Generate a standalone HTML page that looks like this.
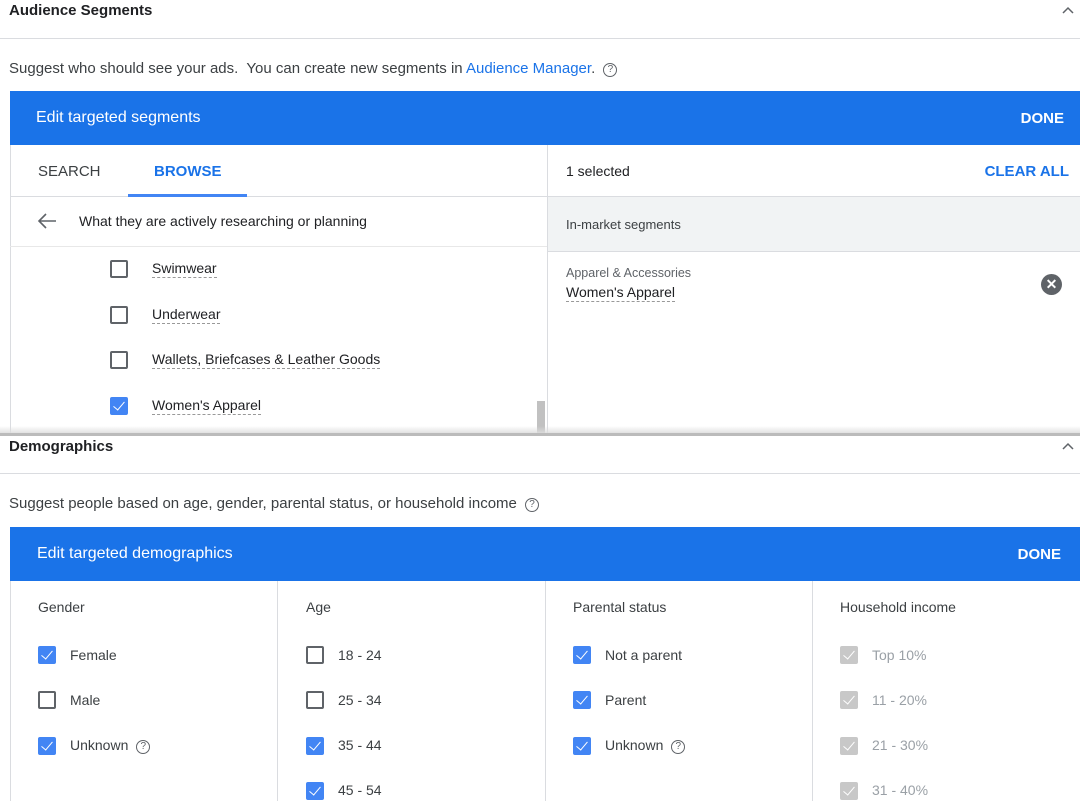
<!DOCTYPE html>
<html><head><style>
*{box-sizing:border-box;margin:0;padding:0}
body{width:1080px;height:801px;overflow:hidden;background:#fff;font-family:"Liberation Sans",sans-serif;color:#3c4043;position:relative}
.a{position:absolute}
.t{font-size:15px;font-weight:bold;color:#202124}
.hr{height:1px;background:#dadce0;left:0;right:0}
.d{font-size:15px;color:#3c4043}
.blue{background:#1a73e8;color:#fff;font-size:16px}
.cb{position:absolute;width:18px;height:18px;border:2px solid #5f6368;border-radius:2px}
.cb.on{background:#4285f4;border-color:#4285f4}
.cb.g{background:#c8c8c8;border-color:#c8c8c8}
.cb.on::after,.cb.g::after{content:"";position:absolute;left:4px;top:0px;width:5px;height:10px;border:solid #fff;border-width:0 1.5px 1.5px 0;transform:rotate(40deg)}
.lbl{position:absolute;font-size:14px;color:#202124}
.ul{border-bottom:1px dashed #999;padding-bottom:1px}
.q{display:inline-block;width:14px;height:14px;border:1.3px solid #5f6368;border-radius:50%;font-size:10px;text-align:center;line-height:12px;vertical-align:1px;margin-left:4px;color:#5f6368}
</style></head><body>
<div class="a t" style="left:9px;top:2px">Audience Segments</div>
<svg class="a" style="left:1062px;top:6px" width="12" height="8" viewBox="0 0 12 8"><path d="M1 7L6 2l5 5" fill="none" stroke="#5f6368" stroke-width="1.5"/></svg>
<div class="a hr" style="top:38px"></div>
<div class="a d" style="left:9px;top:60px">Suggest who should see your ads.&nbsp; You can create new segments in <span style="color:#1a73e8">Audience Manager</span>. <span class="q">?</span></div>
<div class="a blue" style="left:10px;top:91px;width:1070px;height:54px"><span class="a" style="left:26px;top:18px">Edit targeted segments</span><span class="a" style="right:16px;top:19px;font-size:15px;font-weight:bold">DONE</span></div>
<div class="a" style="left:10px;top:145px;width:1px;height:290px;background:#dadce0"></div>
<div class="a" style="left:547px;top:145px;width:1px;height:290px;background:#dadce0"></div>
<div class="a" style="left:10px;top:196px;width:1070px;height:1px;background:#dadce0"></div>
<div class="a" style="left:38px;top:163px;font-size:15px;color:#3c4043">SEARCH</div>
<div class="a" style="left:154px;top:163px;font-size:15px;color:#1a73e8;font-weight:bold">BROWSE</div>
<div class="a" style="left:128px;top:194px;width:119px;height:3px;background:#4285f4"></div>
<svg class="a" style="left:37px;top:213px" width="20" height="16" viewBox="0 0 20 16"><path d="M19 8H2M9 1L2 8l7 7" fill="none" stroke="#5f6368" stroke-width="1.6"/></svg>
<div class="a" style="left:79px;top:213px;font-size:14px;color:#202124">What they are actively researching or planning</div>
<div class="a" style="left:10px;top:246px;width:537px;height:1px;background:#e8e8e8"></div>
<div class="cb" style="left:110px;top:260px"></div><div class="lbl" style="left:152px;top:260px"><span class="ul">Swimwear</span></div>
<div class="cb" style="left:110px;top:306px"></div><div class="lbl" style="left:152px;top:306px"><span class="ul">Underwear</span></div>
<div class="cb" style="left:110px;top:351px"></div><div class="lbl" style="left:152px;top:351px"><span class="ul">Wallets, Briefcases &amp; Leather Goods</span></div>
<div class="cb on" style="left:110px;top:397px"></div><div class="lbl" style="left:152px;top:397px"><span class="ul">Women's Apparel</span></div>
<div class="a" style="left:537px;top:401px;width:8px;height:32px;background:#c1c1c1"></div>
<div class="a" style="left:566px;top:163px;font-size:14px;color:#202124">1 selected</div>
<div class="a" style="right:11px;top:163px;font-size:15px;font-weight:bold;color:#1a73e8">CLEAR ALL</div>
<div class="a" style="left:548px;top:197px;width:532px;height:55px;background:#f1f3f4;border-bottom:1px solid #dadce0"></div>
<div class="a" style="left:566px;top:217px;font-size:13px;color:#3c4043">In-market segments</div>
<div class="a" style="left:566px;top:266px;font-size:12.5px;color:#5f6368">Apparel &amp; Accessories</div>
<div class="a" style="left:566px;top:284px;font-size:14px;color:#202124"><span class="ul">Women's Apparel</span></div>
<div class="a" style="left:1041px;top:274px;width:21px;height:21px;border-radius:50%;background:#5f6368;color:#fff;font-size:14px;text-align:center;line-height:21px;font-weight:bold">&#10005;</div>
<div class="a" style="left:0;top:426px;width:1080px;height:8px;background:linear-gradient(#fff0,#ddd)"></div>
<div class="a" style="left:0;top:433px;width:1080px;height:3px;background:#bbb"></div>
<div class="a t" style="left:9px;top:438px">Demographics</div>
<svg class="a" style="left:1062px;top:442px" width="12" height="8" viewBox="0 0 12 8"><path d="M1 7L6 2l5 5" fill="none" stroke="#5f6368" stroke-width="1.5"/></svg>
<div class="a hr" style="top:473px"></div>
<div class="a d" style="left:9px;top:495px">Suggest people based on age, gender, parental status, or household income <span class="q">?</span></div>
<div class="a blue" style="left:10px;top:527px;width:1070px;height:54px"><span class="a" style="left:27px;top:18px">Edit targeted demographics</span><span class="a" style="right:19px;top:19px;font-size:15px;font-weight:bold">DONE</span></div>
<div class="a" style="left:10px;top:581px;width:1px;height:220px;background:#dadce0"></div>
<div class="a" style="left:277px;top:581px;width:1px;height:220px;background:#dadce0"></div>
<div class="a" style="left:545px;top:581px;width:1px;height:220px;background:#dadce0"></div>
<div class="a" style="left:812px;top:581px;width:1px;height:220px;background:#dadce0"></div>
<div class="lbl" style="left:38px;top:599px;color:#3c4043">Gender</div>
<div class="lbl" style="left:306px;top:599px;color:#3c4043">Age</div>
<div class="lbl" style="left:573px;top:599px;color:#3c4043">Parental status</div>
<div class="lbl" style="left:840px;top:599px;color:#3c4043">Household income</div>
<div class="cb on" style="left:38px;top:646px"></div><div class="lbl" style="left:70px;top:647px;color:#3c4043">Female</div>
<div class="cb" style="left:38px;top:691px"></div><div class="lbl" style="left:70px;top:692px;color:#3c4043">Male</div>
<div class="cb on" style="left:38px;top:737px"></div><div class="lbl" style="left:70px;top:737px;color:#3c4043">Unknown <span class="q">?</span></div>
<div class="cb" style="left:306px;top:646px"></div><div class="lbl" style="left:338px;top:647px;color:#3c4043">18 - 24</div>
<div class="cb" style="left:306px;top:691px"></div><div class="lbl" style="left:338px;top:692px;color:#3c4043">25 - 34</div>
<div class="cb on" style="left:306px;top:737px"></div><div class="lbl" style="left:338px;top:737px;color:#3c4043">35 - 44</div>
<div class="cb on" style="left:306px;top:782px"></div><div class="lbl" style="left:338px;top:782px;color:#3c4043">45 - 54</div>
<div class="cb on" style="left:573px;top:646px"></div><div class="lbl" style="left:605px;top:647px;color:#3c4043">Not a parent</div>
<div class="cb on" style="left:573px;top:691px"></div><div class="lbl" style="left:605px;top:692px;color:#3c4043">Parent</div>
<div class="cb on" style="left:573px;top:737px"></div><div class="lbl" style="left:605px;top:737px;color:#3c4043">Unknown <span class="q">?</span></div>
<div class="cb g" style="left:840px;top:646px"></div><div class="lbl" style="left:872px;top:647px;color:#9aa0a6">Top 10%</div>
<div class="cb g" style="left:840px;top:691px"></div><div class="lbl" style="left:872px;top:692px;color:#9aa0a6">11 - 20%</div>
<div class="cb g" style="left:840px;top:737px"></div><div class="lbl" style="left:872px;top:737px;color:#9aa0a6">21 - 30%</div>
<div class="cb g" style="left:840px;top:782px"></div><div class="lbl" style="left:872px;top:782px;color:#9aa0a6">31 - 40%</div>
</body></html>
